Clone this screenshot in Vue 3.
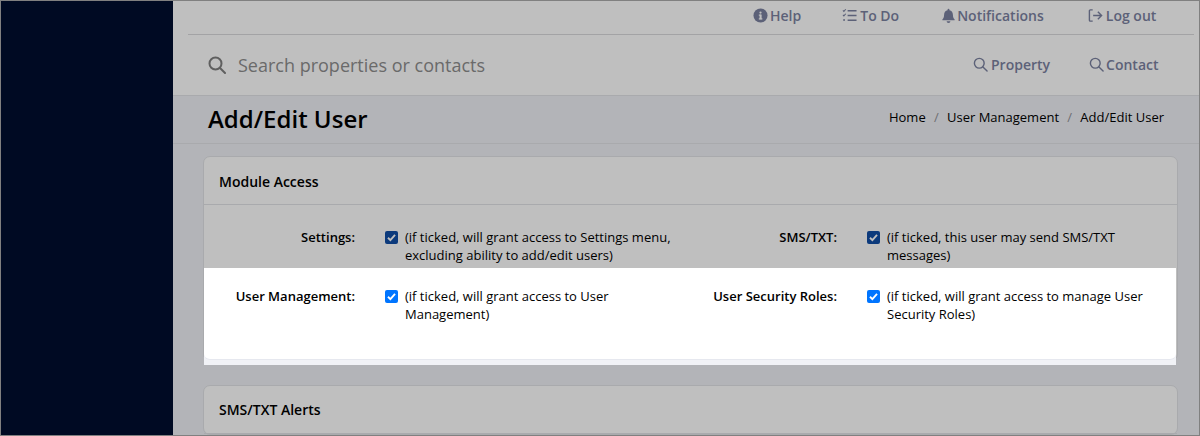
<template>
  <div class="frame">
    <aside class="sidebar"></aside>
    <main class="main">
      <nav class="topnav">
        <a class="navlink help">
          <svg viewBox="0 0 16 16" class="ic"><circle cx="8" cy="8" r="7.500" fill="currentColor"/><rect x="7" y="7" width="2.200" height="5" fill="#bfbfbf"/><rect x="6.200" y="11" width="3.800" height="1.300" fill="#bfbfbf"/><rect x="6.200" y="7" width="2.500" height="1.200" fill="#bfbfbf"/><circle cx="8" cy="4.800" r="1.200" fill="#bfbfbf"/></svg>
          Help
        </a>
        <a class="navlink todo">
          <svg viewBox="0 0 16 16" class="ic" fill="none" stroke="currentColor"><path d="M1 2.600l1 1 2-2.300M1 7.400l1 1 2-2.300" stroke-width="1.100"/><circle cx="2.200" cy="12.800" r="1" fill="currentColor" stroke="none"/><path d="M6 3h9.500M6 8h9.500M6 13h9.500" stroke-width="1.500"/></svg>
          To Do
        </a>
        <a class="navlink notif">
          <svg viewBox="0 0 16 16" class="ic"><path d="M8 0.800a1 1 0 0 1 1 1v.6c2.400.5 3.700 2.400 3.700 4.800 0 3 .9 3.900 1.800 4.900v1H1.500v-1c.9-1 1.800-1.900 1.800-4.900 0-2.400 1.300-4.300 3.700-4.800v-.6a1 1 0 0 1 1-1z" fill="currentColor"/><path d="M6 14.200h4a2 1.800 0 0 1-4 0z" fill="currentColor"/></svg>
          Notifications
        </a>
        <a class="navlink logout">
          <svg viewBox="0 0 16 16" class="ic" fill="none" stroke="currentColor" stroke-width="1.500"><path d="M5 2H2.500A1 1 0 0 0 1.500 3v10a1 1 0 0 0 1 1H5"/><path d="M5.500 8h9M10.500 4l4 4-4 4"/></svg>
          Log out
        </a>
      </nav>

      <div class="searchbar">
        <svg viewBox="0 0 18 18" class="searchicon" fill="none" stroke="currentColor" stroke-width="2"><circle cx="7.500" cy="7.500" r="6"/><path d="M12 12l5 5" stroke-linecap="round"/></svg>
        <span class="placeholder">Search properties or contacts</span>
        <a class="searchlink property">
          <svg viewBox="0 0 16 16" class="ic" fill="none" stroke="currentColor" stroke-width="1.500"><circle cx="6.700" cy="6.700" r="5.200"/><path d="M10.600 10.600L15 15" stroke-linecap="round"/></svg>
          Property
        </a>
        <a class="searchlink contact">
          <svg viewBox="0 0 16 16" class="ic" fill="none" stroke="currentColor" stroke-width="1.500"><circle cx="6.700" cy="6.700" r="5.200"/><path d="M10.600 10.600L15 15" stroke-linecap="round"/></svg>
          Contact
        </a>
      </div>

      <header class="titlebar">
        <h1>Add/Edit User</h1>
        <ol class="crumbs">
          <li>Home</li><li class="sep">/</li><li>User Management</li><li class="sep">/</li><li>Add/Edit User</li>
        </ol>
      </header>

      <section class="content">
        <div class="card first">
          <div class="cardhead">Module Access</div>
          <div class="row dim">
            <div v-for="item in dimRow" :key="item.label" class="cell">
              <label class="lbl">{{ item.label }}</label>
              <span class="check dark"><svg viewBox="0 0 14 14"><path d="M3.200 7.300l2.600 2.600 5-5.600" fill="none" stroke="#bfbfbf" stroke-width="2"/></svg></span>
              <span class="desc">{{ item.desc }}</span>
            </div>
          </div>
          <div class="highlight">
            <div class="row lit">
              <div v-for="item in litRow" :key="item.label" class="cell">
                <label class="lbl">{{ item.label }}</label>
                <span class="check"><svg viewBox="0 0 14 14"><path d="M3.200 7.300l2.600 2.600 5-5.600" fill="none" stroke="#fff" stroke-width="2"/></svg></span>
                <span class="desc">{{ item.desc }}</span>
              </div>
            </div>
          </div>
        </div>
        <div class="card second">
          <div class="cardhead alerts">SMS/TXT Alerts</div>
        </div>
      </section>
    </main>
  </div>
</template>

<script setup>
const dimRow = [
  { label: 'Settings:', desc: '(if ticked, will grant access to Settings menu, excluding ability to add/edit users)' },
  { label: 'SMS/TXT:', desc: '(if ticked, this user may send SMS/TXT messages)' }
]
const litRow = [
  { label: 'User Management:', desc: '(if ticked, will grant access to User Management)' },
  { label: 'User Security Roles:', desc: '(if ticked, will grant access to manage User Security Roles)' }
]
</script>

<style>
html, body { margin: 0; background: #b3b4b8; }
</style>

<style scoped>
.frame {
  box-sizing: border-box;
  width: 1200px;
  height: 436px;
  border: 1px solid #808080;
  display: flex;
  overflow: hidden;
  font-family: "Open Sans", "Liberation Sans", sans-serif;
  color: #000;
}
.sidebar { width: 172px; flex: none; background: #000a23; }
.main { flex: 1; min-width: 0; background: #b3b4b8; }
.topnav {
  height: 34px;
  box-sizing: border-box;
  background: #bfbfbf;
  display: flex;
  align-items: center;
  position: relative;
  color: #5c6178;
  font-size: 14px;
  font-weight: 600;
}
.topnav::after {
  content: "";
  position: absolute;
  left: 15px;
  right: 5px;
  bottom: 0;
  height: 1px;
  background: #a3a3a5;
}
.navlink { display: flex; align-items: center; white-space: nowrap; margin-top: -6px; }
.ic { width: 15px; height: 15px; flex: none; margin-right: 3px; }
.help { margin-left: 580px; }
.help .ic { margin-right: 2px; }
.todo { margin-left: 41px; }
.notif { margin-left: 42px; }
.notif .ic { margin-right: 1px; }
.logout { margin-left: 44px; }
.searchbar {
  height: 61px;
  box-sizing: border-box;
  padding-bottom: 1px;
  background: #bfbfbf;
  border-bottom: 1px solid #a9aaad;
  display: flex;
  align-items: center;
  padding-left: 35px;
  color: #5c6178;
  font-size: 14px;
  font-weight: 600;
}
.searchicon { width: 18px; height: 18px; color: #5f5f5f; flex: none; }
.placeholder { margin-left: 12px; font-size: 18px; font-weight: 400; color: #6a6a6a; width: 735px; flex: none; white-space: nowrap; }
.searchlink { display: flex; align-items: center; }
.contact { margin-left: 39px; }
.contact .ic { margin-right: 2px; }
.titlebar {
  height: 48px;
  box-sizing: border-box;
  border-bottom: 1px solid #a9aaad;
  display: flex;
  align-items: center;
  justify-content: space-between;
  padding: 0 35px;
}
h1 { margin: 0; font-size: 24px; font-weight: 600; line-height: 1.2; }
.crumbs { list-style: none; display: flex; margin: -6px 0 0; padding: 0; font-size: 13px; }
.sep { color: #6e6e72; margin: 0 8.250px; }
.content { padding: 12px 21px 0 30px; }
.card {
  box-sizing: border-box;
  background: #bfbfbf;
  border: 1px solid #a9aaad;
  border-radius: 7px;
}
.first { height: 205px; }
.second { margin-top: 24px; }
.cardhead {
  height: 48px;
  box-sizing: border-box;
  padding: 1px 0 0 15px;
  border-bottom: 1px solid #a9aaad;
  font-size: 14px;
  font-weight: 600;
  display: flex;
  align-items: center;
}
.cardhead.alerts { padding-top: 0; }
.row { display: grid; grid-template-columns: 482px 482px; }
.dim { padding-top: 23px; height: 63px; box-sizing: border-box; }
.cell { display: grid; grid-template-columns: 151px 30px 20px 272px; font-size: 13px; line-height: 18px; align-items: start; }
.lbl { font-weight: 600; text-align: right; }
.check {
  grid-column: 3;
  width: 13px;
  height: 13px;
  margin-top: 3px;
  border-radius: 2px;
  background: #0075ff;
  display: block;
}
.check.dark { background: #0c3a7c; }
.check svg { width: 13px; height: 13px; display: block; }
.desc { grid-column: 4; }
.highlight {
  position: relative;
  margin: 0 1px -5px 0;
  height: 97px;
  background: #f1f2f6;
}
.lit {
  height: 92px;
  box-sizing: border-box;
  padding-top: 19px;
  background: #fff;
  border-bottom: 1px solid #e6e8ef;
  border-radius: 0 0 6px 6px;
}
</style>
